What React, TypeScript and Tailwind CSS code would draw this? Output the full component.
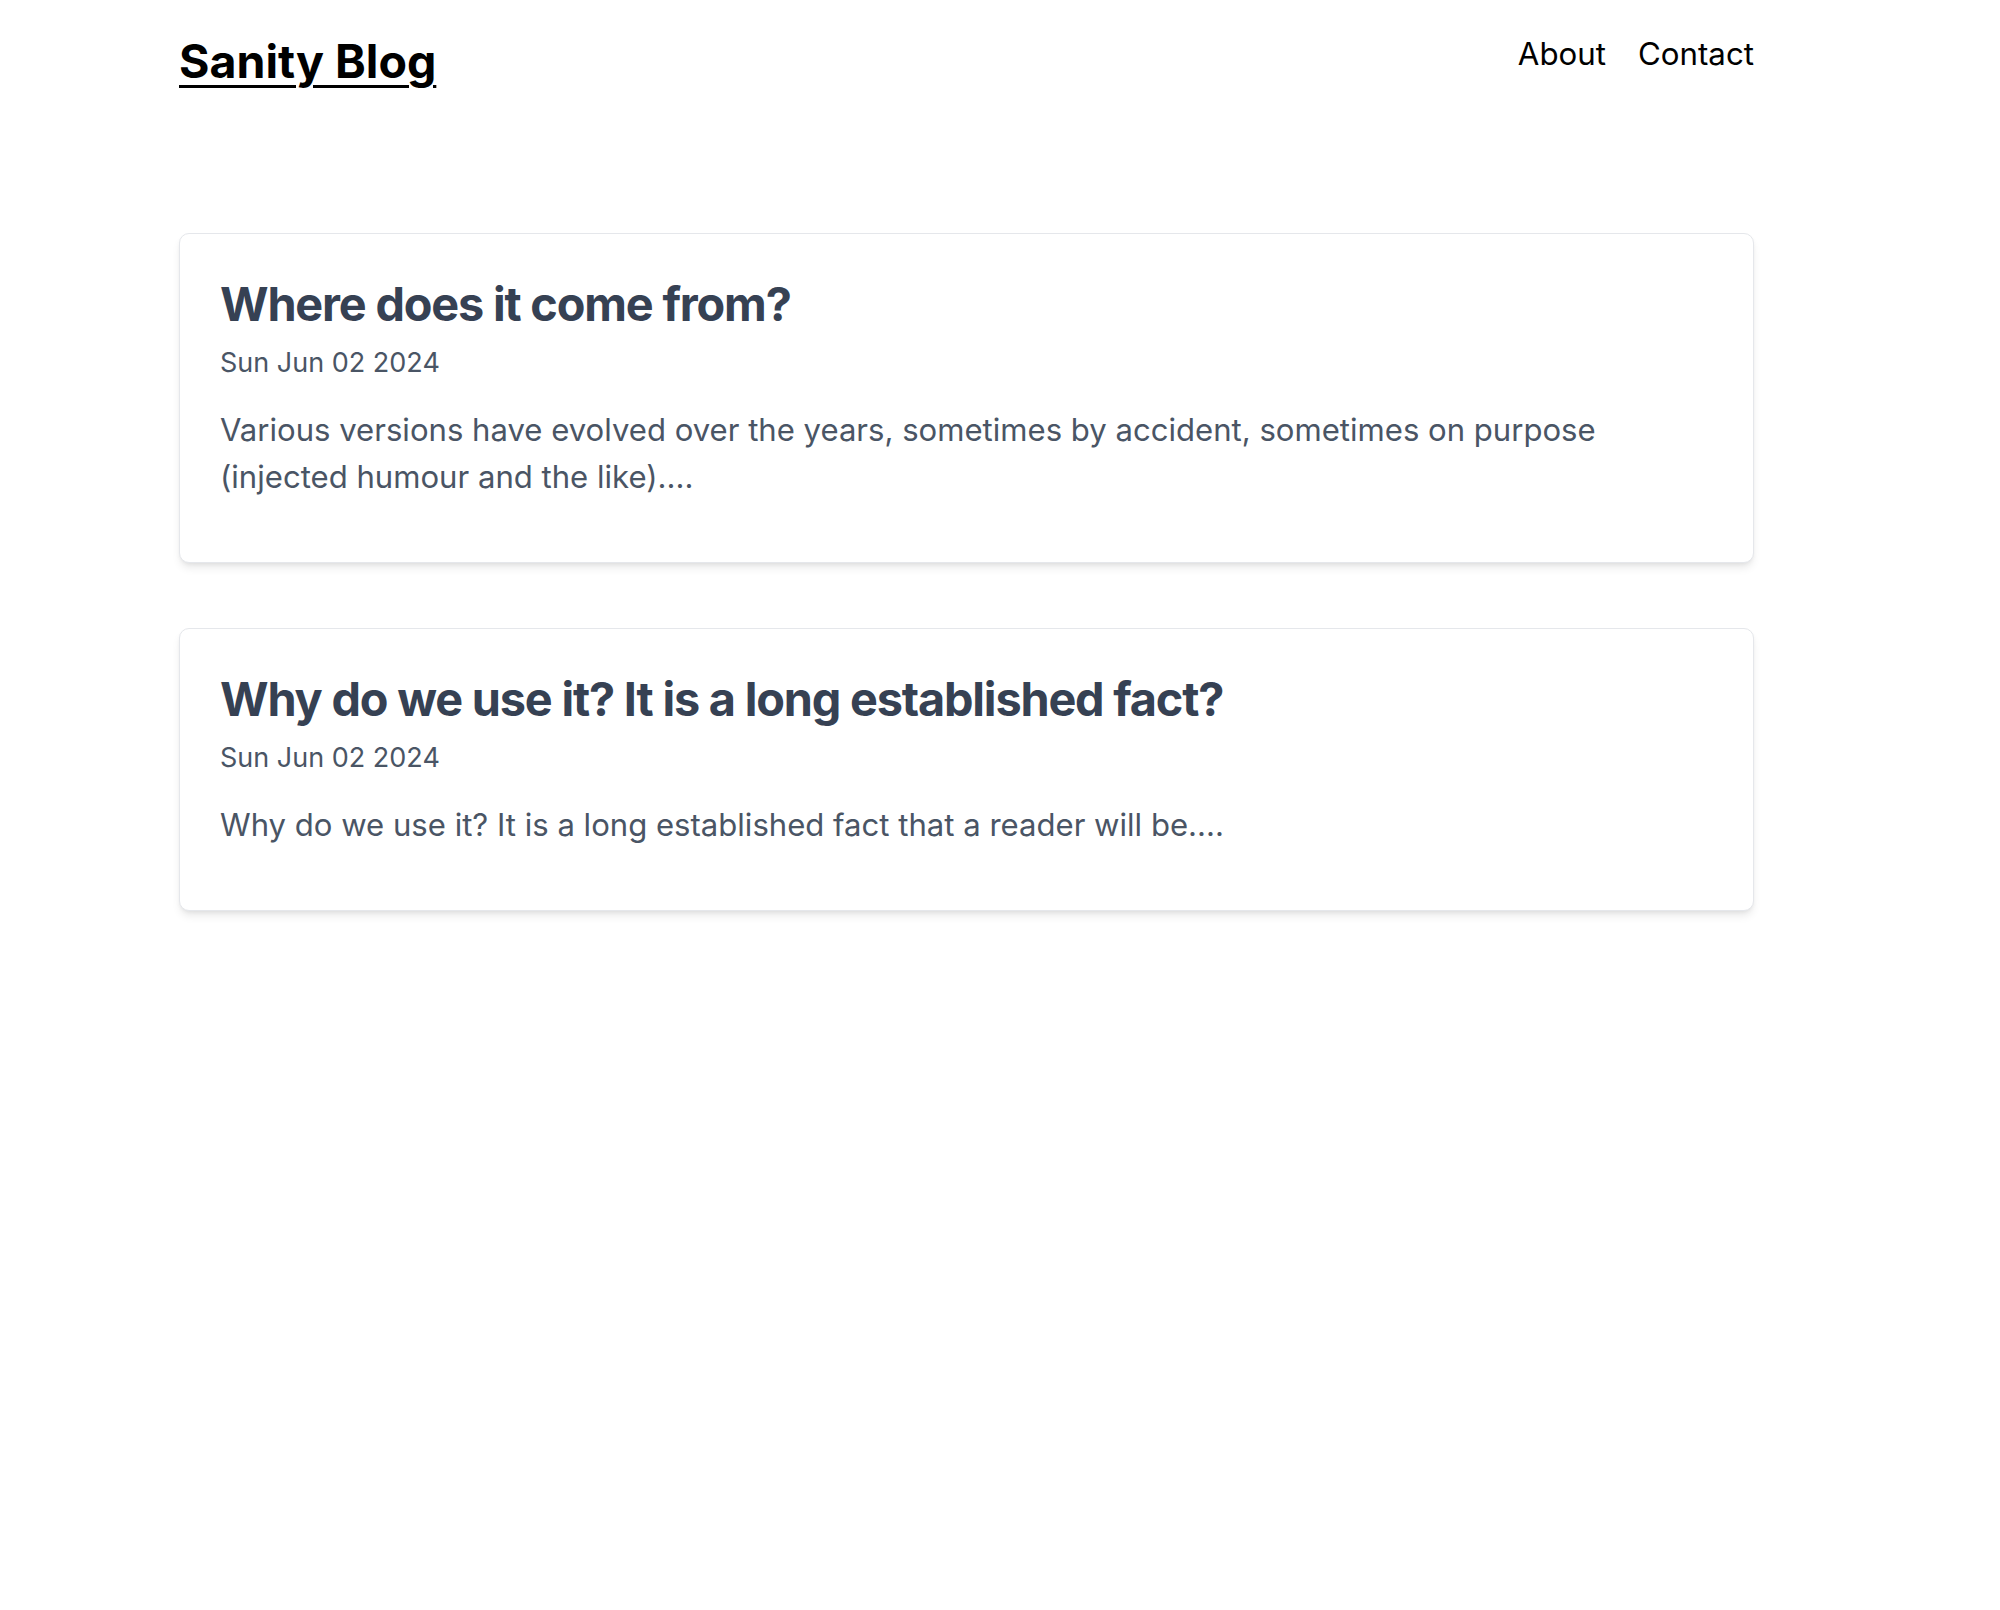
const posts = [
  {
    title: 'Where does it come from?',
    date: 'Sun Jun 02 2024',
    excerpt:
      'Various versions have evolved over the years, sometimes by accident, sometimes on purpose (injected humour and the like)....',
  },
  {
    title: 'Why do we use it? It is a long established fact?',
    date: 'Sun Jun 02 2024',
    excerpt: 'Why do we use it? It is a long established fact that a reader will be....',
  },
];

function Header() {
  return (
    <header className="flex items-start justify-between pt-9">
      <a
        href="#"
        className="text-[46.5px] font-bold leading-[50px] text-black underline decoration-[3px] underline-offset-[7px]"
      >
        Sanity Blog
      </a>
      <nav className="flex gap-[32px] text-[31.25px] leading-[36px] text-black">
        <a href="#">About</a>
        <a href="#">Contact</a>
      </nav>
    </header>
  );
}

function PostCard({ title, date, excerpt }: { title: string; date: string; excerpt: string }) {
  return (
    <article className="rounded-[10px] border border-gray-200 bg-white px-10 pb-[61px] pt-10 shadow-[0_6px_10px_-2px_rgba(0,0,0,0.1),0_2px_5px_-2px_rgba(0,0,0,0.08)]">
      <h2 className="text-[46.8px] font-bold leading-[60px] tracking-tight text-gray-700">{title}</h2>
      <div className="mt-[11px] text-[27px] leading-[36px] text-gray-600">{date}</div>
      <p className="mt-[26px] text-[31.1px] leading-[47px] text-gray-600">{excerpt}</p>
    </article>
  );
}

export default function App() {
  return (
    <div className="min-h-screen bg-white" style={{ fontFamily: 'Inter, "Noto Sans", sans-serif' }}>
      <div className="ml-[179px] w-[1575px]">
        <Header />
        <main className="mt-[147px] flex flex-col gap-[65px]">
          {posts.map((p) => (
            <PostCard key={p.title} {...p} />
          ))}
        </main>
      </div>
    </div>
  );
}
